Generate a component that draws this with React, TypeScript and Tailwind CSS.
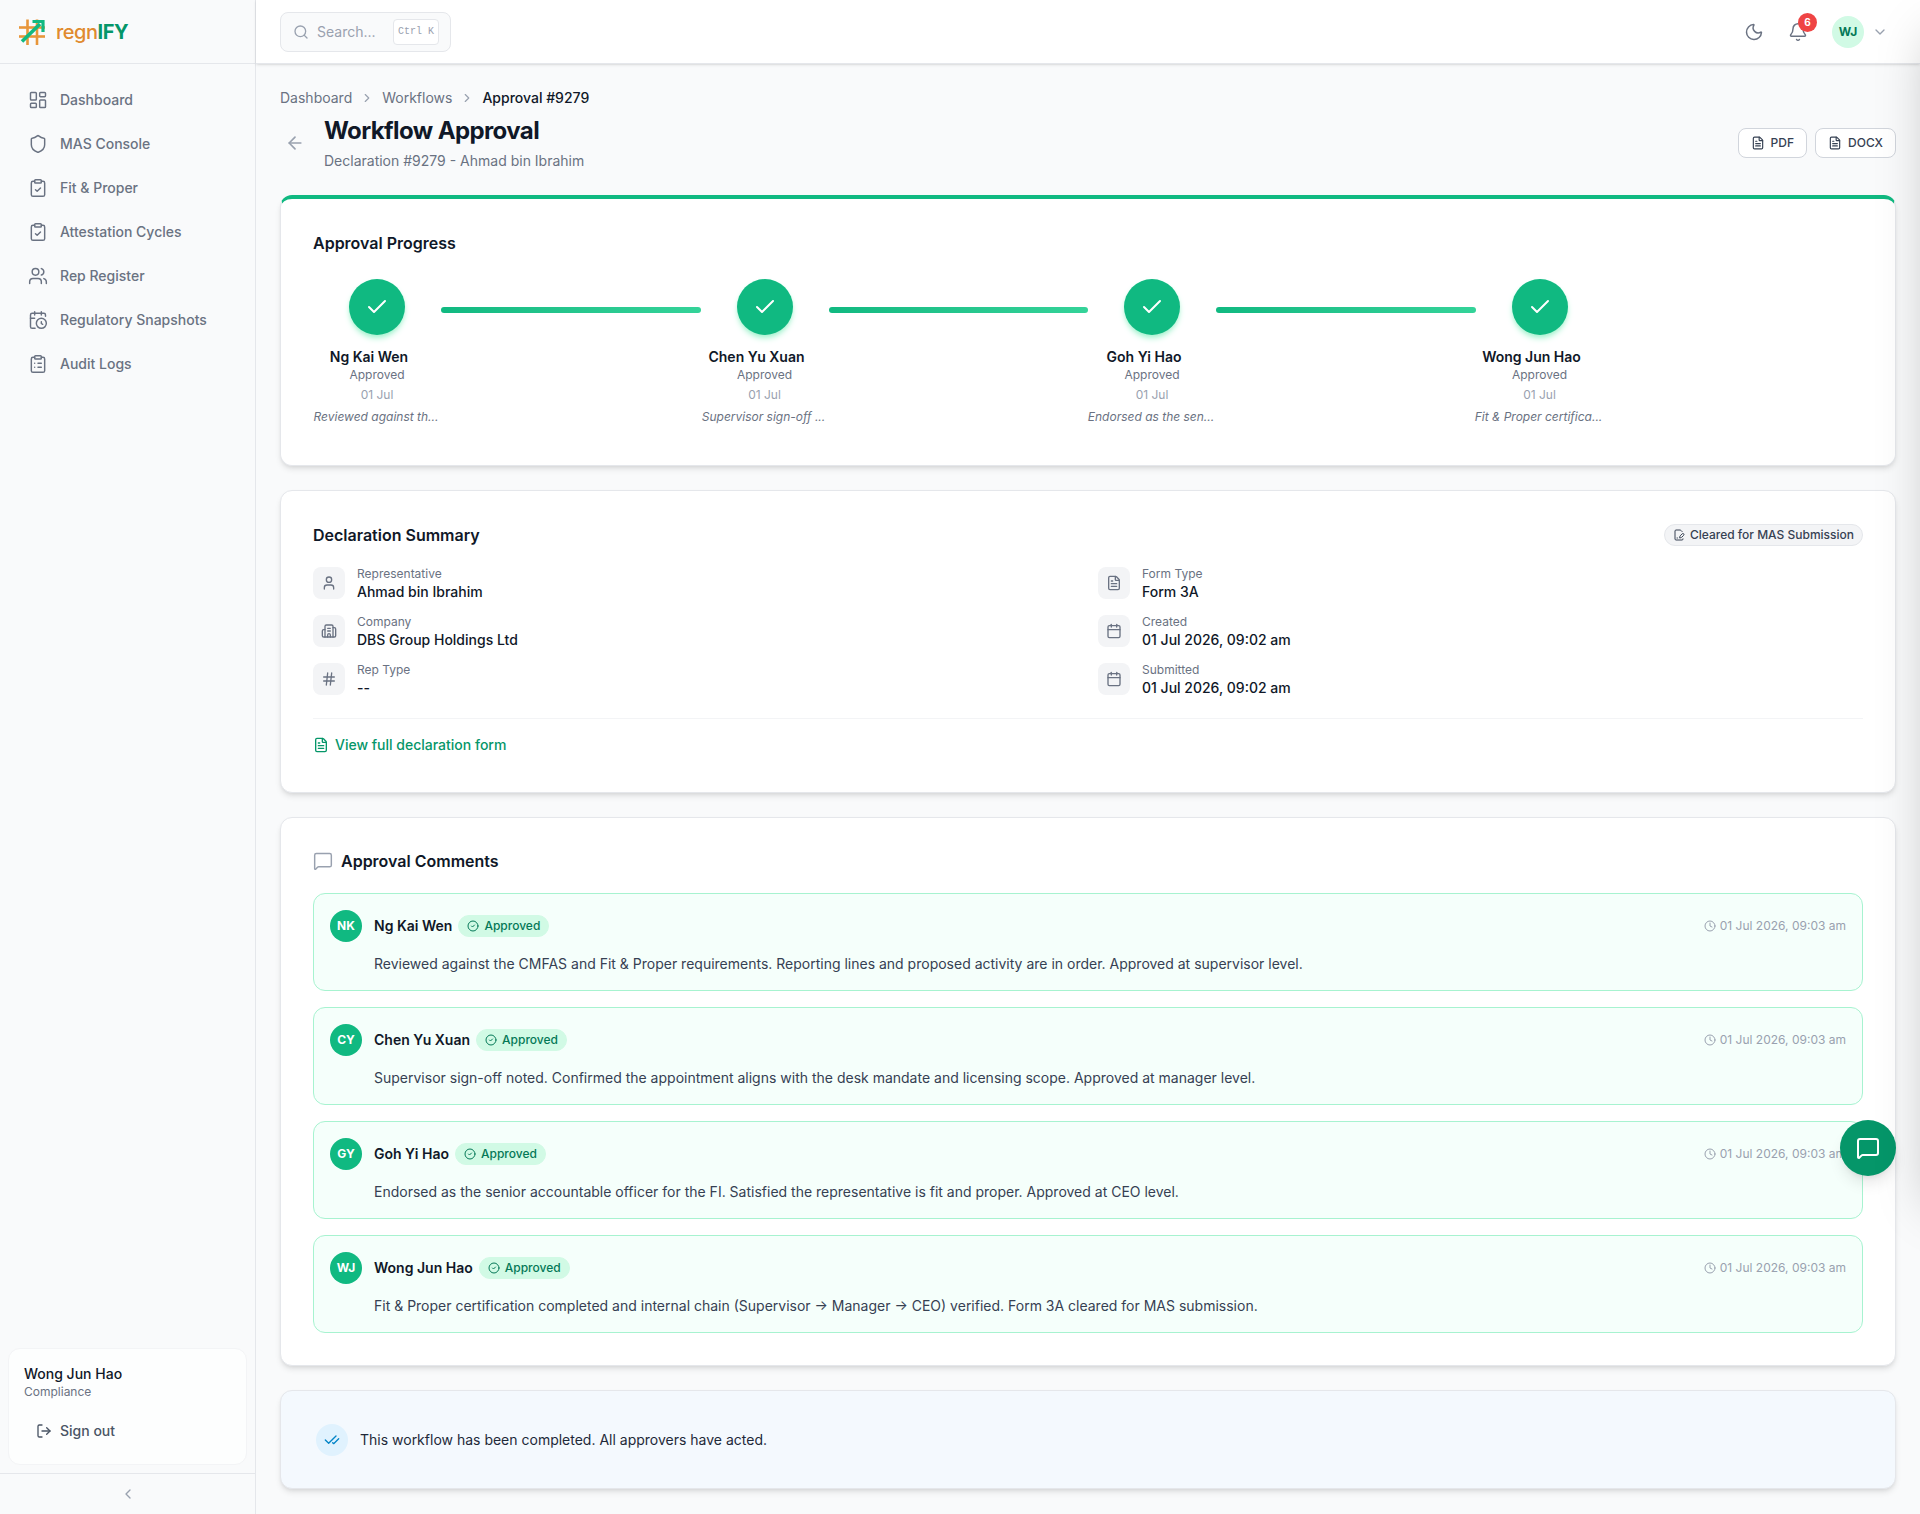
import React from 'react';
import {
  ArrowLeft,
  Bell,
  Building2,
  Calendar,
  CalendarClock,
  Check,
  CheckCheck,
  ChevronDown,
  ChevronLeft,
  ChevronRight,
  CircleCheck,
  ClipboardCheck,
  ClipboardList,
  Clock,
  FileSignature,
  FileText,
  Hash,
  LayoutDashboard,
  LogOut,
  MessageSquare,
  Moon,
  Search,
  Shield,
  User,
  Users,
} from 'lucide-react';

const navItems = [
  { label: 'Dashboard', icon: LayoutDashboard },
  { label: 'MAS Console', icon: Shield },
  { label: 'Fit & Proper', icon: ClipboardCheck },
  { label: 'Attestation Cycles', icon: ClipboardCheck },
  { label: 'Rep Register', icon: Users },
  { label: 'Regulatory Snapshots', icon: CalendarClock },
  { label: 'Audit Logs', icon: ClipboardList },
];

const steps = [
  { name: 'Ng Kai Wen', note: 'Reviewed against th...' },
  { name: 'Chen Yu Xuan', note: 'Supervisor sign-off ...' },
  { name: 'Goh Yi Hao', note: 'Endorsed as the sen...' },
  { name: 'Wong Jun Hao', note: 'Fit & Proper certifica...' },
];

const summaryLeft = [
  { label: 'Representative', value: 'Ahmad bin Ibrahim', icon: User },
  { label: 'Company', value: 'DBS Group Holdings Ltd', icon: Building2 },
  { label: 'Rep Type', value: '--', icon: Hash },
];

const summaryRight = [
  { label: 'Form Type', value: 'Form 3A', icon: FileText },
  { label: 'Created', value: '01 Jul 2026, 09:02 am', icon: Calendar },
  { label: 'Submitted', value: '01 Jul 2026, 09:02 am', icon: Calendar },
];

const comments = [
  {
    initials: 'NK',
    name: 'Ng Kai Wen',
    text: 'Reviewed against the CMFAS and Fit & Proper requirements. Reporting lines and proposed activity are in order. Approved at supervisor level.',
  },
  {
    initials: 'CY',
    name: 'Chen Yu Xuan',
    text: 'Supervisor sign-off noted. Confirmed the appointment aligns with the desk mandate and licensing scope. Approved at manager level.',
  },
  {
    initials: 'GY',
    name: 'Goh Yi Hao',
    text: 'Endorsed as the senior accountable officer for the FI. Satisfied the representative is fit and proper. Approved at CEO level.',
  },
  {
    initials: 'WJ',
    name: 'Wong Jun Hao',
    text: 'Fit & Proper certification completed and internal chain (Supervisor → Manager → CEO) verified. Form 3A cleared for MAS submission.',
  },
];

// Orange hash with the green arrow going through it
const Logo = () => (
  <svg width="28" height="28" viewBox="0 0 28 28" fill="none">
    <g stroke="#e8963a" strokeWidth="2.6">
      <path d="M9.5 1.5V27" />
      <path d="M19 1.5V27" />
      <path d="M1 9.5H27" />
      <path d="M1 18.5H27" />
    </g>
    <path d="M4 23.5L22 6" stroke="#10b981" strokeWidth="3.6" />
    <path d="M14.5 3.5H25V14" stroke="#10b981" strokeWidth="3.2" />
  </svg>
);

const SummaryRow = ({ label, value, icon: Icon }: { label: string; value: string; icon: typeof User }) => (
  <div className="flex items-center gap-3 h-8">
    <div className="w-8 h-8 rounded-lg bg-gray-100 flex items-center justify-center text-gray-500 shrink-0">
      <Icon size={16} />
    </div>
    <div className="pt-[2px]">
      <p className="text-xs leading-4 text-gray-500">{label}</p>
      <p className="text-sm leading-5 font-medium text-gray-900">{value}</p>
    </div>
  </div>
);

const App: React.FC = () => {
  return (
    <div className="relative flex h-[1514px] overflow-hidden bg-gray-50 font-['Inter',sans-serif] text-gray-900">
      {/* Sidebar */}
      <aside className="w-64 shrink-0 flex flex-col bg-gray-50 border-r border-gray-200">
        <div className="h-16 px-[18px] flex items-center gap-[10px] border-b border-gray-200">
          <Logo />
          <span className="text-xl font-medium tracking-tight text-[#e08a2e]">
            regn<span className="font-bold text-[#059669]">IFY</span>
          </span>
        </div>
        <nav className="flex-1 px-3 py-4 flex flex-col gap-1">
          {navItems.map((item) => (
            <a key={item.label} className="h-10 px-4 flex items-center gap-3 text-sm font-medium text-gray-500">
              <item.icon size={20} strokeWidth={1.75} className="shrink-0" />
              {item.label}
            </a>
          ))}
        </nav>
        <div className="mx-2 mb-2 h-[117px] rounded-xl bg-white/70 border border-gray-100 pl-[15px] pt-[15px]">
          <p className="text-sm leading-5 font-medium text-gray-900">Wong Jun Hao</p>
          <p className="text-xs leading-4 text-gray-500">Compliance</p>
          <div className="mt-[21px] pl-3 flex items-center gap-2 text-sm font-medium text-gray-600">
            <LogOut size={16} />
            Sign out
          </div>
        </div>
        <div className="h-[41px] border-t border-gray-200 flex items-center justify-center text-gray-400">
          <ChevronLeft size={16} />
        </div>
      </aside>

      <div className="flex-1 min-w-0 flex flex-col">
        {/* Top bar */}
        <header className="h-16 shrink-0 bg-white border-b border-gray-200 shadow-sm flex items-center justify-between pl-6 pr-8">
          <div className="w-[171px] h-10 rounded-lg border border-gray-200 bg-gray-50 flex items-center pl-[12px] pr-[11px] gap-2 text-gray-400">
            <Search size={16} className="shrink-0" />
            <span className="text-sm flex-1">Search...</span>
            <kbd className="h-[26px] w-[46px] rounded border border-gray-200 bg-white flex items-center justify-center font-['Liberation_Mono',monospace] text-[10px] text-gray-400">
              Ctrl K
            </kbd>
          </div>
          <div className="flex items-center">
            <Moon size={20} strokeWidth={1.75} className="text-gray-500" />
            <div className="relative ml-6">
              <Bell size={20} strokeWidth={1.75} className="text-gray-500" />
              <span className="absolute -top-[9px] -right-[9px] w-[19px] h-[19px] rounded-full bg-[#ef4444] text-white text-[10px] font-bold flex items-center justify-center">
                6
              </span>
            </div>
            <div className="ml-6 w-8 h-8 rounded-full bg-[#d1fae5] text-[#047857] text-xs font-bold flex items-center justify-center">
              WJ
            </div>
            <ChevronDown size={16} className="ml-2 text-gray-400" />
          </div>
        </header>

        <main className="flex-1 px-6 pt-6">
          {/* Breadcrumb */}
          <div className="flex items-center gap-2 text-sm leading-5 text-gray-500 h-5">
            <span>Dashboard</span>
            <ChevronRight size={14} className="text-gray-400" />
            <span>Workflows</span>
            <ChevronRight size={14} className="text-gray-400" />
            <span className="font-medium text-gray-900">Approval #9279</span>
          </div>

          {/* Page header */}
          <div className="mt-[7px] flex items-center justify-between">
            <div className="flex items-center">
              <div className="w-11 pl-[5px] text-gray-400">
                <ArrowLeft size={20} />
              </div>
              <div>
                <h1 className="text-2xl leading-8 font-bold tracking-tight text-gray-900">Workflow Approval</h1>
                <p className="mt-[4px] text-sm leading-5 text-gray-500">Declaration #9279 - Ahmad bin Ibrahim</p>
              </div>
            </div>
            <div className="flex items-center gap-2">
              <button className="h-[30px] px-3 rounded-lg border border-gray-300 bg-white flex items-center gap-[6px] text-xs font-medium text-gray-700">
                <FileText size={14} />
                PDF
              </button>
              <button className="h-[30px] px-3 rounded-lg border border-gray-300 bg-white flex items-center gap-[6px] text-xs font-medium text-gray-700">
                <FileText size={14} />
                DOCX
              </button>
            </div>
          </div>

          {/* Approval progress */}
          <section className="mt-[24px] h-[271px] rounded-xl bg-white border border-gray-200 border-t-4 border-t-[#10b981] shadow-md px-8 pt-[32px]">
            <h2 className="text-base leading-6 font-semibold text-gray-900">Approval Progress</h2>
            <div className="mt-6 flex items-start">
              {steps.map((step, i) => (
                <React.Fragment key={step.name}>
                  <div className="w-32 shrink-0 flex flex-col items-center text-center">
                    <div className="w-14 h-14 rounded-full bg-[#10b981] text-white flex items-center justify-center shadow-md shadow-[#a7f3d0]">
                      <Check size={24} strokeWidth={2} />
                    </div>
                    <p className="mt-3 pr-4 text-sm leading-5 font-semibold text-gray-900 whitespace-nowrap">{step.name}</p>
                    <p className="text-xs leading-4 text-gray-500">Approved</p>
                    <p className="mt-1 text-xs leading-4 text-gray-400">01 Jul</p>
                    <p className="mt-[6px] pr-[2px] text-xs leading-4 italic text-gray-500 whitespace-nowrap">{step.note}</p>
                  </div>
                  {i < steps.length - 1 && (
                    <div className="mt-[28px] w-[259.5px] h-[6px] rounded-full bg-gradient-to-r from-[#10b981] to-[#34d399] shrink-0" />
                  )}
                </React.Fragment>
              ))}
            </div>
          </section>

          {/* Declaration summary */}
          <section className="mt-6 h-[303px] rounded-xl bg-white border border-gray-200 shadow-md px-8 pt-[32px]">
            <div className="flex items-center justify-between">
              <h2 className="text-base leading-6 font-semibold text-gray-900">Declaration Summary</h2>
              <span className="h-[22px] pl-2 pr-2 rounded-full border border-gray-200 bg-gray-100 flex items-center gap-[5px] text-xs font-medium text-gray-700">
                <FileSignature size={12} />
                Cleared for MAS Submission
              </span>
            </div>
            <div className="mt-[20px] grid grid-cols-2 gap-x-5">
              <div className="flex flex-col gap-4">
                {summaryLeft.map((row) => (
                  <SummaryRow key={row.label} {...row} />
                ))}
              </div>
              <div className="flex flex-col gap-4">
                {summaryRight.map((row) => (
                  <SummaryRow key={row.label} {...row} />
                ))}
              </div>
            </div>
            <div className="mt-[23px] pt-4 border-t border-gray-100 flex items-center gap-[6px] text-sm leading-5 font-medium text-[#059669]">
              <FileText size={16} />
              View full declaration form
            </div>
          </section>

          {/* Comments */}
          <section className="mt-6 h-[549px] rounded-xl bg-white border border-gray-200 shadow-md px-8 pt-[31px]">
            <div className="flex items-center gap-2 h-6">
              <MessageSquare size={20} strokeWidth={1.75} className="text-gray-400" />
              <h2 className="text-base leading-6 font-semibold text-gray-900">Approval Comments</h2>
            </div>
            <div className="mt-5 flex flex-col gap-4">
              {comments.map((c) => (
                <div key={c.initials} className="h-[98px] rounded-xl border border-[#a7f3d0] bg-[#f5fffb] px-4 pt-4">
                  <div className="flex items-start gap-3">
                    <div className="w-8 h-8 rounded-full bg-[#10b981] text-white text-xs font-bold flex items-center justify-center shrink-0">
                      {c.initials}
                    </div>
                    <div className="flex-1 min-w-0">
                      <div className="flex items-center justify-between h-8">
                        <div className="flex items-center gap-[6px]">
                          <span className="text-sm font-semibold text-gray-900">{c.name}</span>
                          <span className="h-[22px] px-2 rounded-full bg-[#d1fae5] border border-[#d1fae5] flex items-center gap-[5px] text-xs font-medium text-[#047857]">
                            <CircleCheck size={12} />
                            Approved
                          </span>
                        </div>
                        <span className="flex items-center gap-1 text-xs text-gray-400">
                          <Clock size={12} />
                          01 Jul 2026, 09:03 am
                        </span>
                      </div>
                      <p className="mt-3 text-sm leading-5 text-gray-700">{c.text}</p>
                    </div>
                  </div>
                </div>
              ))}
            </div>
          </section>

          {/* Completed notice */}
          <section className="mt-6 h-[99px] rounded-xl bg-[#f4f9fe] border border-gray-200 shadow-md pl-[35px] flex items-center gap-3">
            <div className="w-8 h-8 rounded-full bg-[#e0f2fe] text-[#0284c7] flex items-center justify-center">
              <CheckCheck size={16} />
            </div>
            <p className="text-sm text-gray-800">This workflow has been completed. All approvers have acted.</p>
          </section>
        </main>
      </div>

      {/* Chat button */}
      <button className="absolute top-[1120px] right-6 w-14 h-14 rounded-full bg-[#059669] text-white flex items-center justify-center shadow-lg">
        <MessageSquare size={24} />
      </button>

      {/* Chat panel parked off the right edge, only its shadow shows */}
      <div className="absolute top-0 left-full w-[400px] h-[1190px] shadow-2xl pointer-events-none" />
    </div>
  );
};

export default App;
